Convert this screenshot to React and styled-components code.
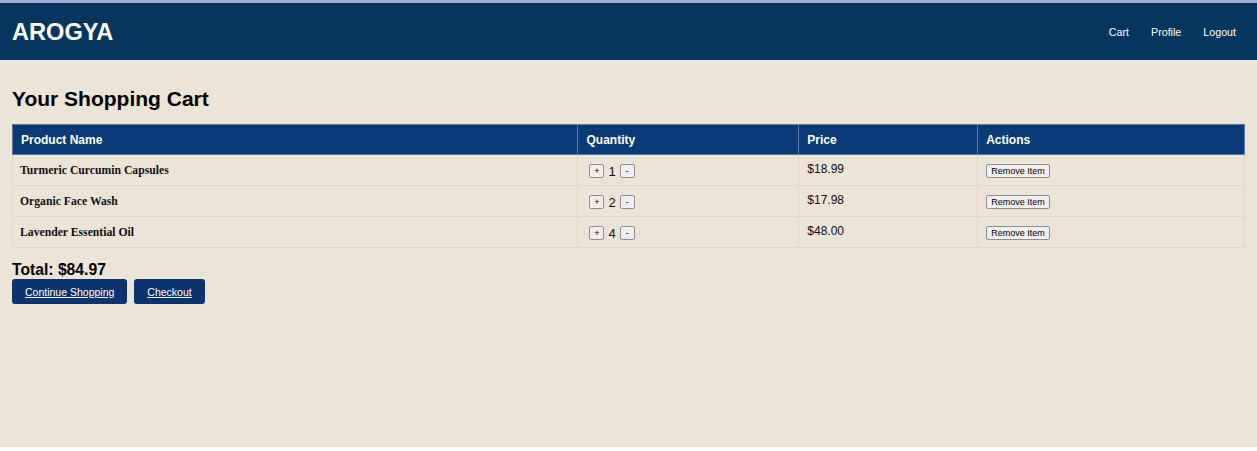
import React from "react";
import styled, { createGlobalStyle } from "styled-components";

const Global = createGlobalStyle`
  html, body { margin: 0; padding: 0; background: #ffffff; }
  body { font-family: "Liberation Sans", Arial, sans-serif; }
`;

const Page = styled.div`
  min-height: 447px;
  background: #ebe4d7;
  border-top: 3px solid #a9a6cf;
  box-sizing: border-box;
`;

const Header = styled.header`
  height: 57px;
  background: #06365e;
  display: flex;
  align-items: center;
  justify-content: space-between;
  padding: 1px 21px 0 12px;
  box-sizing: border-box;
`;

const Logo = styled.div`
  color: #ffffff;
  font-weight: bold;
  font-size: 23.6px;
`;

const Nav = styled.nav`
  display: flex;
  gap: 22px;
`;

const NavLink = styled.a`
  color: #ffffff;
  font-size: 10.7px;
  text-decoration: none;
`;

const Main = styled.main`
  padding: 27px 12px 0 12px;
`;

const Title = styled.h2`
  margin: 0 0 13px 0;
  font-size: 21px;
  font-weight: bold;
  color: #000;
`;

const Table = styled.table`
  width: 100%;
  border-collapse: collapse;
`;

const Th = styled.th`
  background: #0a3b78;
  color: #ffffff;
  font-size: 12px;
  font-weight: bold;
  text-align: left;
  padding: 0 8px;
  height: 30px;
  box-sizing: border-box;
  border: 1px solid #5a78a6;
  width: ${(p) => p.$w};
`;

const Td = styled.td`
  height: 31px;
  box-sizing: border-box;
  padding: 0 8px;
  border: 1px solid #ddd6c9;
  font-size: 12px;
  color: #111;
  vertical-align: middle;
`;

const NameCell = styled(Td)`
  font-family: "Liberation Serif", "Times New Roman", serif;
  font-weight: bold;
  font-size: 11.7px;
  padding-left: 7px;
`;

const Qty = styled.div`
  display: flex;
  align-items: center;
  gap: 4px;
  padding-left: 3px;
  font-size: 13px;
  padding-top: 2px;
`;

const SmallBtn = styled.button`
  font-family: "Liberation Sans", Arial, sans-serif;
  font-size: 9px;
  width: 15px;
  height: 14px;
  padding: 0;
  border: 1px solid #8f8f8f;
  border-radius: 2px;
  background: #efefef;
  color: #000;
  line-height: 1;
`;

const PriceCell = styled(Td)`
  padding-bottom: 3px;
`;

const RemoveBtn = styled.button`
  font-family: "Liberation Sans", Arial, sans-serif;
  font-size: 9px;
  padding: 1px 4px;
  height: 14px;
  border: 1px solid #8f8f8f;
  border-radius: 2px;
  background: #efefef;
  color: #000;
  margin-top: 2px;
`;

const Total = styled.div`
  margin-top: 13px;
  font-size: 15.7px;
  line-height: 17px;
  font-weight: bold;
  color: #000;
`;

const Actions = styled.div`
  display: flex;
  gap: 7px;
  margin-top: 1px;
`;

const ActionBtn = styled.a`
  display: inline-flex;
  align-items: center;
  justify-content: center;
  height: 25px;
  padding: 0 13px;
  background: #0a3370;
  color: #ffffff;
  font-size: 10.5px;
  text-decoration: underline;
  border-radius: 3px;
`;

const items = [
  { name: "Turmeric Curcumin Capsules", qty: 1, price: "$18.99" },
  { name: "Organic Face Wash", qty: 2, price: "$17.98" },
  { name: "Lavender Essential Oil", qty: 4, price: "$48.00" },
];

export default function App() {
  return (
    <>
      <Global />
      <Page>
        <Header>
          <Logo>AROGYA</Logo>
          <Nav>
            <NavLink>Cart</NavLink>
            <NavLink>Profile</NavLink>
            <NavLink>Logout</NavLink>
          </Nav>
        </Header>
        <Main>
          <Title>Your Shopping Cart</Title>
          <Table>
            <thead>
              <tr>
                <Th $w="566px">Product Name</Th>
                <Th $w="221px">Quantity</Th>
                <Th $w="179px">Price</Th>
                <Th $w="267px">Actions</Th>
              </tr>
            </thead>
            <tbody>
              {items.map((it) => (
                <tr key={it.name}>
                  <NameCell>{it.name}</NameCell>
                  <Td>
                    <Qty>
                      <SmallBtn>+</SmallBtn>
                      {it.qty}
                      <SmallBtn>-</SmallBtn>
                    </Qty>
                  </Td>
                  <PriceCell>{it.price}</PriceCell>
                  <Td>
                    <RemoveBtn>Remove Item</RemoveBtn>
                  </Td>
                </tr>
              ))}
            </tbody>
          </Table>
          <Total>Total: $84.97</Total>
          <Actions>
            <ActionBtn>Continue Shopping</ActionBtn>
            <ActionBtn>Checkout</ActionBtn>
          </Actions>
        </Main>
      </Page>
    </>
  );
}
